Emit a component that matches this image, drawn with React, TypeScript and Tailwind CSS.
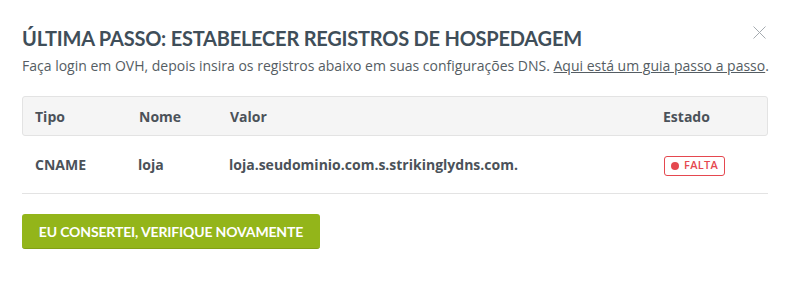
const rows = [
  {
    tipo: "CNAME",
    nome: "loja",
    valor: "loja.seudominio.com.s.strikinglydns.com.",
  },
];

const App = () => {
  return (
    <div className="w-[793px] h-[288px] bg-white relative font-['Open_Sans',sans-serif]">
      {/* Close */}
      <button className="absolute left-[753px] top-[26px] w-[13px] h-[13px]">
        <svg viewBox="0 0 13 13" className="w-[13px] h-[13px]">
          <path d="M0.5 0.5 L12.5 12.5 M12.5 0.5 L0.5 12.5" stroke="#a5abb0" strokeWidth="1" fill="none" />
        </svg>
      </button>

      <div className="px-[22px] pt-[25px]">
        <h2 className="font-['Lato',sans-serif] font-bold text-[20px] leading-[27px] text-[#3f4e59] tracking-[-0.22px]">
          ÚLTIMA PASSO: ESTABELECER REGISTROS DE HOSPEDAGEM
        </h2>
        <p className="mt-[3px] text-[14px] leading-[22px] text-[#555d63]">
          Faça login em OVH, depois insira os registros abaixo em suas configurações DNS.{" "}
          <a className="underline">Aqui está um guia passo a passo</a>.
        </p>

        {/* Table */}
        <div className="mt-[19px] w-[746px]">
          <div className="flex items-center h-[40px] bg-[#f5f5f5] border border-[#e3e3e3] rounded-[3px] text-[14px] font-bold text-[#4b5259]">
            <div className="w-[116px] pl-[12px]">Tipo</div>
            <div className="w-[91px]">Nome</div>
            <div className="flex-1">Valor</div>
            <div className="w-[104px]">Estado</div>
          </div>
          {rows.map((row) => (
            <div
              key={row.tipo + row.nome}
              className="flex items-center h-[58px] border-b border-[#e3e3e3] text-[14px] font-bold text-[#4b5259]"
            >
              <div className="w-[116px] pl-[13px]">{row.tipo}</div>
              <div className="w-[91px]">{row.nome}</div>
              <div className="flex-1">{row.valor}</div>
              <div className="w-[104px]">
                <span className="inline-flex items-center gap-[5px] h-[20px] px-[6px] border border-[#e5484f] rounded-[3px] text-[11px] font-semibold text-[#e5484f] tracking-[0.3px]">
                  <span className="w-[8px] h-[8px] rounded-full bg-[#e5484f]" />
                  FALTA
                </span>
              </div>
            </div>
          ))}
        </div>

        <button className="mt-[20px] h-[35px] w-[298px] rounded-[3px] bg-[#93b51a] border-b border-[#82a015] text-white font-['Lato',sans-serif] font-bold text-[14px] tracking-[-0.15px]">
          EU CONSERTEI, VERIFIQUE NOVAMENTE
        </button>
      </div>
    </div>
  );
};

export default App;
